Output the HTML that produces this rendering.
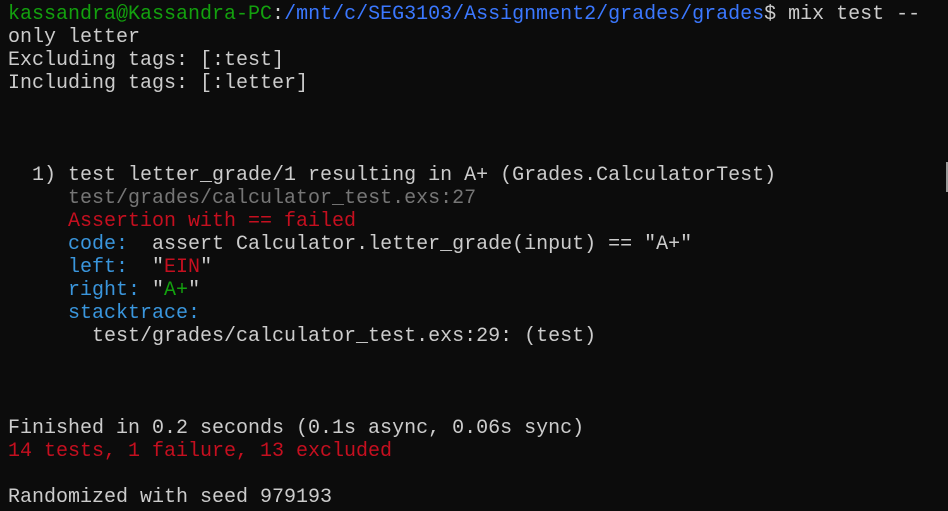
<!DOCTYPE html>
<html><head><meta charset="utf-8"><style>
html,body{margin:0;padding:0;background:#0c0c0c;width:948px;height:511px;overflow:hidden}
pre{margin:0;position:absolute;left:8px;top:3px;font-family:"Liberation Mono",monospace;font-size:20px;line-height:23px;color:#cccccc;white-space:pre}
.g{color:#13a10e}.b{color:#3b78ff}.r{color:#c50f1f}.d{color:#767676}.c{color:#3a96dd}
.sb{position:absolute;left:946px;top:162px;width:2px;height:30px;background:#9a9a9a}
</style></head><body>
<pre><span class="g">kassandra@Kassandra-PC</span>:<span class="b">/mnt/c/SEG3103/Assignment2/grades/grades</span>$ mix test --
only letter
Excluding tags: [:test]
Including tags: [:letter]



  1) test letter_grade/1 resulting in A+ (Grades.CalculatorTest)
     <span class="d">test/grades/calculator_test.exs:27</span>
     <span class="r">Assertion with == failed</span>
     <span class="c">code:</span>  assert Calculator.letter_grade(input) == "A+"
     <span class="c">left:</span>  "<span class="r">EIN</span>"
     <span class="c">right:</span> "<span class="g">A+</span>"
     <span class="c">stacktrace:</span>
       test/grades/calculator_test.exs:29: (test)



Finished in 0.2 seconds (0.1s async, 0.06s sync)
<span class="r">14 tests, 1 failure, 13 excluded</span>

Randomized with seed 979193
</pre>
<div class="sb"></div>
</body></html>
